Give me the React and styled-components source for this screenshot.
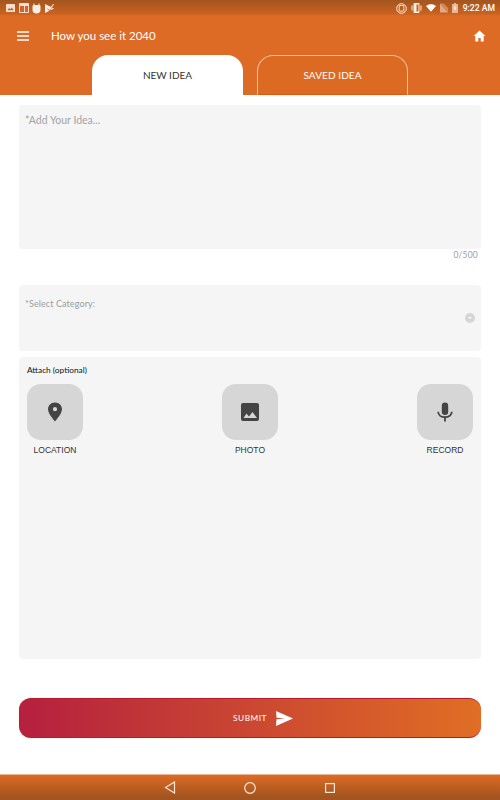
import styled, { createGlobalStyle } from "styled-components";

const GlobalStyle = createGlobalStyle`
  html, body {
    margin: 0;
    padding: 0;
    background: #fff;
  }
  * {
    box-sizing: border-box;
  }
`;

const Screen = styled.div`
  width: 500px;
  height: 800px;
  display: flex;
  flex-direction: column;
  overflow: hidden;
  font-family: "Lato", "Noto Sans", sans-serif;
`;

const Header = styled.header`
  height: 95px;
  flex: none;
  display: flex;
  flex-direction: column;
  background: #dd6b25;
`;

const StatusBar = styled.div`
  height: 16px;
  flex: none;
  display: flex;
  align-items: center;
  justify-content: space-between;
  padding: 0 5px 0 6px;
  background: linear-gradient(#a4551f, #c9621f 85%, #dd6b25);
`;

const StatusGroup = styled.div`
  display: flex;
  align-items: center;
  gap: ${(props) => props.gap}px;
`;

const Clock = styled.span`
  font-family: "Roboto", sans-serif;
  font-size: 8.6px;
  font-weight: 500;
  color: #fff;
  margin-left: 1px;
`;

const Toolbar = styled.div`
  height: 39px;
  flex: none;
  display: flex;
  align-items: center;
  padding: 0 14px 0 16px;
`;

const Title = styled.h1`
  flex: 1;
  margin: 0 0 0 21px;
  font-size: 11.5px;
  font-weight: 400;
  color: #fff;
`;

const Tabs = styled.div`
  height: 40px;
  flex: none;
  display: flex;
  gap: 14px;
  padding-left: 92px;
`;

const Tab = styled.div`
  width: 151px;
  display: flex;
  align-items: center;
  justify-content: center;
  border-radius: 16px 16px 0 0;
  font-size: 10px;
  letter-spacing: ${(props) => (props.$active ? 0 : 0.1)}px;
  color: ${(props) => (props.$active ? "#333" : "#fff")};
  background: ${(props) => (props.$active ? "#fff" : "#dd6a22")};
  border: ${(props) => (props.$active ? "none" : "1px solid #f3c19f")};
  border-bottom: ${(props) => (props.$active ? "none" : "1px solid #e2560c")};
`;

const Content = styled.main`
  flex: 1;
  display: flex;
  flex-direction: column;
  padding: 10px 19px 0;
`;

const Panel = styled.div`
  flex: none;
  height: ${(props) => props.$height}px;
  background: #f5f5f5;
  border-radius: 4px;
`;

const IdeaPanel = styled(Panel)`
  padding: 9px 6px;
  font-size: 10.5px;
  color: #a3a3a3;
`;

const Counter = styled.div`
  height: 36px;
  padding: 1px 3px 0 0;
  text-align: right;
  font-size: 8.5px;
  letter-spacing: 0.2px;
  color: #9a9ea6;
`;

const CategoryPanel = styled(Panel)`
  position: relative;
  padding: 13px 6px;
  font-size: 9px;
  letter-spacing: 0.1px;
  color: #9c9c9c;
`;

const Chevron = styled.span`
  position: absolute;
  right: 6px;
  top: 28px;
  width: 10px;
  height: 10px;
  border-radius: 50%;
  background: #d6d6d6;
  display: flex;
  align-items: center;
  justify-content: center;

  &::after {
    content: "";
    border-left: 2px solid transparent;
    border-right: 2px solid transparent;
    border-top: 2px solid #fff;
  }
`;

const AttachPanel = styled(Panel)`
  margin-top: 6px;
  padding: 8px 8px;
`;

const AttachTitle = styled.div`
  font-size: 8.3px;
  line-height: 10px;
  color: #111;
  margin-bottom: 9px;
`;

const AttachRow = styled.div`
  display: flex;
  justify-content: space-between;
`;

const AttachItem = styled.div`
  width: 56px;
  display: flex;
  flex-direction: column;
  align-items: center;
  gap: 5px;
`;

const AttachButton = styled.div`
  width: 56px;
  height: 56px;
  border-radius: 14px;
  background: #d6d6d6;
  display: flex;
  align-items: center;
  justify-content: center;
`;

const AttachLabel = styled.span`
  font-family: "Liberation Sans", sans-serif;
  font-size: 8.5px;
  line-height: 10px;
  color: #333;
  white-space: nowrap;
`;

const SubmitButton = styled.button`
  flex: none;
  height: 40px;
  margin-top: 39px;
  padding: 0 0 0 26px;
  display: flex;
  align-items: center;
  justify-content: center;
  gap: 9px;
  border: none;
  border-top: 1px solid #b41c30;
  border-bottom: 1px solid #b41c30;
  border-radius: 12px;
  background: linear-gradient(90deg, #b5203f, #e06e24);
  box-shadow: 0 0 1px rgba(222, 108, 38, 0.6);
  font-family: inherit;
  font-size: 8.3px;
  letter-spacing: 0.5px;
  color: #fff;
`;

const NavBar = styled.nav`
  height: 26px;
  flex: none;
  display: flex;
  align-items: center;
  justify-content: center;
  gap: 68px;
  border-top: 1px solid #e8b695;
  background: linear-gradient(#dd6b25, #a4551f 85%);
`;

const StatusIcons = () => (
  <StatusGroup gap={3.500}>
    <svg width="9" height="10" viewBox="0 0 10 10">
      <rect width="10" height="9" y="0.5" rx="1" fill="#f6dfcf" />
      <path d="M1.5 7.5 3.5 5l1.5 1.5L6.5 4.5l2 3z" fill="#c9621f" />
    </svg>
    <svg width="10" height="10" viewBox="0 0 10 10">
      <rect width="10" height="10" rx="1" fill="#f6dfcf" />
      <rect x="1" y="3" width="8" height="6" fill="#d8602a" />
      <rect x="5" y="3" width="1" height="6" fill="#f6dfcf" />
    </svg>
    <svg width="9" height="11" viewBox="0 0 9 11">
      <path d="M2 0.5v2M7 0.5v2" stroke="#fbeee4" strokeWidth="1" />
      <path d="M0.5 3.5C.5 2.5 1 2 2 2h5c1 0 1.5.5 1.5 1.5V7c0 2-1.5 3.5-4 3.5S.5 9 .5 7z" fill="#fbeee4" />
    </svg>
    <svg width="9" height="11" viewBox="0 0 10 11">
      <path d="M0 0.5 10 5.5 0 10.5z" fill="#fbeee4" />
      <path d="M3 5.5 5 7.5 9 1.5" fill="none" stroke="#c9621f" strokeWidth="1.2" />
      <path d="M3.5 5 5 6.5 9.5 0.8" fill="none" stroke="#fbeee4" strokeWidth="1.2" />
    </svg>
  </StatusGroup>
);

const SystemIcons = () => (
  <StatusGroup gap={4}>
    <svg width="11" height="11" viewBox="0 0 11 11">
      <circle cx="5.5" cy="5.5" r="4.8" fill="none" stroke="#fbeee4" strokeWidth="1" />
      <rect x="3.2" y="2.5" width="4.6" height="5.6" rx="0.5" fill="none" stroke="#fbeee4" strokeWidth="0.9" />
    </svg>
    <svg width="11" height="10" viewBox="0 0 11 10">
      <rect x="2.5" y="0" width="6" height="10" rx="1" fill="#fbeee4" />
      <rect x="5.5" y="1.5" width="2" height="7" fill="#c9621f" />
      <path d="M1 2.5v5M10 2.5v5" stroke="#fbeee4" strokeWidth="1" />
    </svg>
    <svg width="10" height="8" viewBox="0 0 12 9">
      <path d="M0 2.2C3.5-.7 8.5-.7 12 2.2L6 9z" fill="#fff" />
    </svg>
    <svg width="8" height="10" viewBox="0 0 9 10">
      <path d="M0 0 9 10H0z" fill="#e3a884" />
      <path d="M0 0h4l5 5v5z" fill="#d58a5e" />
    </svg>
    <svg width="6" height="10" viewBox="0 0 6 10">
      <rect x="0" y="1" width="6" height="9" fill="#e9b594" />
      <rect x="2" y="0" width="2" height="1" fill="#e9b594" />
      <path d="M3.5 1.5 1.5 5.5H3L2.5 8.5 4.5 4.5H3z" fill="#fff" />
    </svg>
    <Clock>9:22 AM</Clock>
  </StatusGroup>
);

const MenuIcon = () => (
  <svg width="14" height="10" viewBox="0 0 14 10">
    <path d="M1 1h12M1 5h12M1 9h12" stroke="#fff" strokeWidth="1.4" />
  </svg>
);

const HomeIcon = () => (
  <svg width="13" height="12" viewBox="0 0 13 12">
    <path d="M6.5 0.5 0.5 6h1.8v5.5h3V8h2.400v3.500h3V6h1.800z" fill="#fff" />
  </svg>
);

const PinIcon = () => (
  <svg width="16" height="20" viewBox="0 0 16 20">
    <path
      fillRule="evenodd"
      d="M8 0.500C3.800 0.500 1 3.500 1 7.300 1 12 8 19.500 8 19.500S15 12 15 7.300C15 3.500 12.200 0.500 8 0.500zM8 9.300a2.100 2.100 0 1 1 0-4.200 2.100 2.100 0 0 1 0 4.200z"
      fill="#444"
    />
  </svg>
);

const PhotoIcon = () => (
  <svg width="18" height="18" viewBox="0 0 18 18">
    <path
      d="M18 16V2a2 2 0 0 0-2-2H2a2 2 0 0 0-2 2v14a2 2 0 0 0 2 2h14a2 2 0 0 0 2-2zM5.500 10.500l2.500 3 3.500-4.500 4.500 6H2.500z"
      fill="#444"
    />
  </svg>
);

const MicIcon = () => (
  <svg width="16" height="20" viewBox="0 0 16 20">
    <rect x="4.800" y="0.500" width="6.400" height="12.500" rx="3.200" fill="#444" />
    <path d="M1.200 9.800c0 3.500 3 5.400 6.800 5.400s6.800-1.900 6.800-5.400" fill="none" stroke="#444" strokeWidth="1.800" />
    <path d="M8 15v4.500" stroke="#444" strokeWidth="1.800" />
  </svg>
);

const SendIcon = () => (
  <svg width="17" height="15" viewBox="0 0 17 15">
    <path d="M0 0 17 7.500 0 15 0.500 8.200 9 7.500 0.500 6.800z" fill="#fff" />
  </svg>
);

const attachments = [
  { label: "LOCATION", icon: <PinIcon /> },
  { label: "PHOTO", icon: <PhotoIcon /> },
  { label: "RECORD", icon: <MicIcon /> },
];

export default function App() {
  return (
    <>
      <GlobalStyle />
      <Screen>
        <Header>
          <StatusBar>
            <StatusIcons />
            <SystemIcons />
          </StatusBar>
          <Toolbar>
            <MenuIcon />
            <Title>How you see it 2040</Title>
            <HomeIcon />
          </Toolbar>
          <Tabs>
            <Tab $active>NEW IDEA</Tab>
            <Tab>SAVED IDEA</Tab>
          </Tabs>
        </Header>
        <Content>
          <IdeaPanel $height={144}>*Add Your Idea...</IdeaPanel>
          <Counter>0/500</Counter>
          <CategoryPanel $height={66}>
            *Select Category:
            <Chevron />
          </CategoryPanel>
          <AttachPanel $height={302}>
            <AttachTitle>Attach (optional)</AttachTitle>
            <AttachRow>
              {attachments.map((item) => (
                <AttachItem key={item.label}>
                  <AttachButton>{item.icon}</AttachButton>
                  <AttachLabel>{item.label}</AttachLabel>
                </AttachItem>
              ))}
            </AttachRow>
          </AttachPanel>
          <SubmitButton>
            SUBMIT
            <SendIcon />
          </SubmitButton>
        </Content>
        <NavBar>
          <svg width="12" height="13" viewBox="0 0 12 13">
            <path d="M10.500 1 1.500 6.500l9 5.500z" fill="none" stroke="#f8e6da" strokeWidth="1.200" />
          </svg>
          <svg width="12" height="12" viewBox="0 0 12 12">
            <circle cx="6" cy="6" r="5.300" fill="none" stroke="#f8e6da" strokeWidth="1.200" />
          </svg>
          <svg width="12" height="10" viewBox="0 0 12 10">
            <rect x="1.600" y="0.600" width="8.800" height="8.800" fill="none" stroke="#f8e6da" strokeWidth="1.200" />
          </svg>
        </NavBar>
      </Screen>
    </>
  );
}
